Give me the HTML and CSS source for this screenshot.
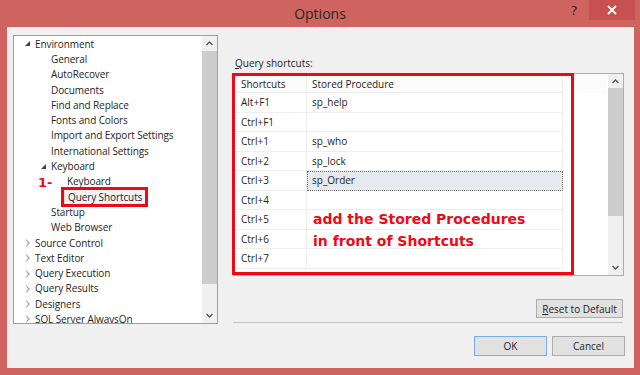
FILE: index.html
```html
<!DOCTYPE html>
<html lang="en">
<head>
    <meta charset="UTF-8">
    <title>Options</title>
    <link rel="stylesheet" href="styles.css">
</head>
<body>
    <div class="window">
        <div class="titlebar">
            <span class="title">Options</span>
            <div class="controls">
                <span class="help">?</span>
                <span class="close">
                    <svg width="10" height="10" viewBox="0 0 10 10"><path d="M1 1L9 9M9 1L1 9" stroke="#fff" stroke-width="1.8"/></svg>
                </span>
            </div>
        </div>

        <div class="content">
            <!-- left tree -->
            <div class="tree">
                <ul class="tree-list">
                    <li>
                        <div class="node"><span class="twist open"></span>Environment</div>
                        <ul>
                            <li><div class="node"><span class="twist"></span>General</div></li>
                            <li><div class="node"><span class="twist"></span>AutoRecover</div></li>
                            <li><div class="node"><span class="twist"></span>Documents</div></li>
                            <li><div class="node"><span class="twist"></span>Find and Replace</div></li>
                            <li><div class="node"><span class="twist"></span>Fonts and Colors</div></li>
                            <li><div class="node"><span class="twist"></span>Import and Export Settings</div></li>
                            <li><div class="node"><span class="twist"></span>International Settings</div></li>
                            <li>
                                <div class="node"><span class="twist open"></span>Keyboard</div>
                                <ul>
                                    <li><div class="node"><span class="twist"></span>Keyboard</div></li>
                                    <li><div class="node"><span class="twist"></span><span class="selected">Query Shortcuts</span></div></li>
                                </ul>
                            </li>
                            <li><div class="node"><span class="twist"></span>Startup</div></li>
                            <li><div class="node"><span class="twist"></span>Web Browser</div></li>
                        </ul>
                    </li>
                    <li><div class="node"><span class="twist closed"></span>Source Control</div></li>
                    <li><div class="node"><span class="twist closed"></span>Text Editor</div></li>
                    <li><div class="node"><span class="twist closed"></span>Query Execution</div></li>
                    <li><div class="node"><span class="twist closed"></span>Query Results</div></li>
                    <li><div class="node"><span class="twist closed"></span>Designers</div></li>
                    <li><div class="node"><span class="twist closed"></span>SQL Server AlwaysOn</div></li>
                </ul>
                <div class="vscroll tree-scroll">
                    <div class="arrow"><svg width="7" height="5" viewBox="0 0 7 5"><path d="M0.5 4L3.5 1L6.5 4" fill="none" stroke="#555" stroke-width="1.4"/></svg></div>
                    <div class="thumb"></div>
                    <div class="track"></div>
                    <div class="arrow"><svg width="7" height="5" viewBox="0 0 7 5"><path d="M0.5 1L3.5 4L6.5 1" fill="none" stroke="#555" stroke-width="1.4"/></svg></div>
                </div>
                <!-- annotation -->
                <span class="note-num">1-</span>
                <span class="mark-item"></span>
            </div>

            <!-- right pane -->
            <div class="pane">
                <div class="pane-label"><u>Q</u>uery shortcuts:</div>
                <div class="grid-box">
                    <div class="grid">
                        <div class="grid-row head">
                            <div class="cell key">Shortcuts</div>
                            <div class="cell proc">Stored Procedure</div>
                        </div>
                        <div class="grid-row"><div class="cell key">Alt+F1</div><div class="cell proc">sp_help</div></div>
                        <div class="grid-row"><div class="cell key">Ctrl+F1</div><div class="cell proc"></div></div>
                        <div class="grid-row"><div class="cell key">Ctrl+1</div><div class="cell proc">sp_who</div></div>
                        <div class="grid-row"><div class="cell key">Ctrl+2</div><div class="cell proc">sp_lock</div></div>
                        <div class="grid-row"><div class="cell key">Ctrl+3</div><div class="cell proc current">sp_Order</div></div>
                        <div class="grid-row"><div class="cell key">Ctrl+4</div><div class="cell proc"></div></div>
                        <div class="grid-row"><div class="cell key">Ctrl+5</div><div class="cell proc"></div></div>
                        <div class="grid-row"><div class="cell key">Ctrl+6</div><div class="cell proc"></div></div>
                        <div class="grid-row"><div class="cell key">Ctrl+7</div><div class="cell proc"></div></div>
                    </div>
                    <div class="vscroll grid-scroll">
                        <div class="arrow"><svg width="7" height="5" viewBox="0 0 7 5"><path d="M0.5 4L3.5 1L6.5 4" fill="none" stroke="#555" stroke-width="1.4"/></svg></div>
                        <div class="thumb"></div>
                        <div class="track"></div>
                        <div class="arrow"><svg width="7" height="5" viewBox="0 0 7 5"><path d="M0.5 1L3.5 4L6.5 1" fill="none" stroke="#555" stroke-width="1.4"/></svg></div>
                    </div>
                    <!-- annotation -->
                    <span class="mark-grid"></span>
                    <div class="note">add the Stored Procedures<br>in front of Shortcuts</div>
                </div>

                <div class="reset-row">
                    <button class="btn reset"><u>R</u>eset to Default</button>
                </div>
                <div class="sep"></div>
                <div class="actions">
                    <button class="btn ok">OK</button>
                    <button class="btn">Cancel</button>
                </div>
            </div>
        </div>
    </div>
</body>
</html>
```

FILE: styles.css
```css
* {
    box-sizing: border-box;
}

html, body {
    margin: 0;
    padding: 0;
}

body {
    font-family: "Open Sans", "Noto Sans", sans-serif;
    font-size: 10px;
    color: #1e1e1e;
    background: #cf6360;
}

.window {
    width: 640px;
    height: 375px;
    display: flex;
    flex-direction: column;
    background: #cf6360;
}

/* title bar */
.titlebar {
    height: 27px;
    flex: none;
    display: grid;
    grid-template-columns: 1fr auto 1fr;
    align-items: start;
}

.title {
    grid-column: 2;
    font-size: 14px;
    line-height: 27px;
    color: #262626;
}

.controls {
    grid-column: 3;
    justify-self: end;
    display: flex;
    margin-right: 5px;
}

.help {
    width: 26px;
    height: 20px;
    margin-right: 2px;
    text-align: center;
    font-size: 13px;
    line-height: 20px;
    color: #1c1c1c;
}

.close {
    width: 46px;
    height: 20px;
    background: #c75050;
    display: flex;
    align-items: center;
    justify-content: center;
}

/* dialog body */
.content {
    flex: 1;
    margin: 0 6px 7px 7px;
    background: #f0f0f0;
    display: flex;
    align-items: flex-start;
    padding: 8px 8px 0 6px;
}

.tree {
    position: relative;
    width: 205px;
    height: 289px;
    border: 1px solid #a0a0a0;
    background: #fff;
    display: flex;
    flex: none;
}

.tree-list {
    flex: 1;
    list-style: none;
    margin: 0;
    padding: 0 0 0 9px;
    overflow: hidden;
    letter-spacing: -0.1px;
}

.tree-list ul {
    list-style: none;
    margin: 0;
    padding-left: 16px;
}

.node {
    display: flex;
    align-items: center;
    height: 15.3px;
    white-space: nowrap;
}

.twist {
    width: 12px;
    height: 15px;
    flex: none;
    position: relative;
}

.twist.open::before {
    content: "";
    position: absolute;
    left: 2px;
    top: 5px;
    border-left: 5px solid transparent;
    border-bottom: 5px solid #404040;
}

.twist.closed::before {
    content: "";
    position: absolute;
    left: 3px;
    top: 4px;
    width: 0;
    height: 0;
    border-top: 4px solid transparent;
    border-bottom: 4px solid transparent;
    border-left: 4px solid #a6a6a6;
}

.twist.closed::after {
    content: "";
    position: absolute;
    left: 3px;
    top: 5px;
    border-top: 3px solid transparent;
    border-bottom: 3px solid transparent;
    border-left: 2px solid #fff;
}

.selected {
    margin-left: -3px;
    padding: 0 3px;
    line-height: 14px;
    background: #f2f2f2;
    border: 1px solid #dadada;
}

/* scrollbars */
.vscroll {
    width: 15px;
    flex: none;
    background: #f0f0f0;
    display: flex;
    flex-direction: column;
}

.arrow {
    height: 15px;
    flex: none;
    display: flex;
    align-items: center;
    justify-content: center;
}

.thumb {
    background: #cdcdcd;
    flex: none;
}

.track {
    flex: 1;
}

.tree-scroll .thumb {
    height: 233px;
}

.grid-scroll .thumb {
    height: 128px;
}

.grid-scroll .arrow:first-child {
    height: 14px;
}

/* right pane */
.pane {
    width: 392px;
    margin-left: 15px;
    display: flex;
    flex-direction: column;
}

.pane-label {
    margin-top: 21px;
    line-height: 15px;
    padding-left: 2px;
}

.grid-box {
    position: relative;
    margin-top: 2px;
    width: 391px;
    height: 203px;
    border: 1px solid #abadb3;
    background: #fff;
    display: flex;
}

.grid {
    flex: 1;
    padding: 1px;
}

.grid-row {
    display: flex;
    height: 19.5px;
}

.grid-row.head {
    height: 18px;
    background: #fcfcfc;
}

.cell {
    display: flex;
    align-items: center;
    padding-left: 5px;
    border-right: 1px solid #eeeeee;
    border-bottom: 1px solid #eeeeee;
    white-space: nowrap;
}

.cell.key {
    width: 72px;
    padding-left: 6px;
}

.cell.proc {
    width: 256px;
}

.cell.current {
    background: #e6eaef;
    outline: 1px dotted #707070;
    outline-offset: -1px;
}

/* annotations drawn over the dialog */
.mark-grid {
    position: absolute;
    left: -2px;
    top: -1px;
    width: 342px;
    height: 202px;
    border: 3px solid #ee0a14;
}

.mark-item {
    position: absolute;
    left: 47px;
    top: 151px;
    width: 87px;
    height: 20px;
    border: 3px solid #ee0a14;
}

.note-num {
    position: absolute;
    left: 24px;
    top: 139px;
    font-family: "DejaVu Sans", sans-serif;
    font-weight: bold;
    font-size: 13px;
    color: #ee0a14;
}

.note {
    position: absolute;
    left: 79px;
    top: 134px;
    font-family: "DejaVu Sans", sans-serif;
    font-weight: bold;
    font-size: 14px;
    line-height: 22px;
    color: #ee0a14;
}

/* buttons */
.btn {
    font-family: inherit;
    font-size: 10px;
    color: #1e1e1e;
    background: #e1e1e1;
    border: 1px solid #adadad;
    height: 20px;
    padding: 0;
}

.reset-row {
    margin-top: 23px;
    display: flex;
    justify-content: flex-end;
    padding-right: 2px;
}

.btn.reset {
    width: 87px;
    height: 19px;
}

.sep {
    margin-top: 4px;
    width: 390px;
    border-top: 1px solid #c4c4c4;
}

.actions {
    margin-top: 13px;
    display: flex;
    justify-content: flex-end;
    gap: 5px;
}

.actions .btn {
    width: 73px;
}

.btn.ok {
    border-color: #78aee5;
}
```
